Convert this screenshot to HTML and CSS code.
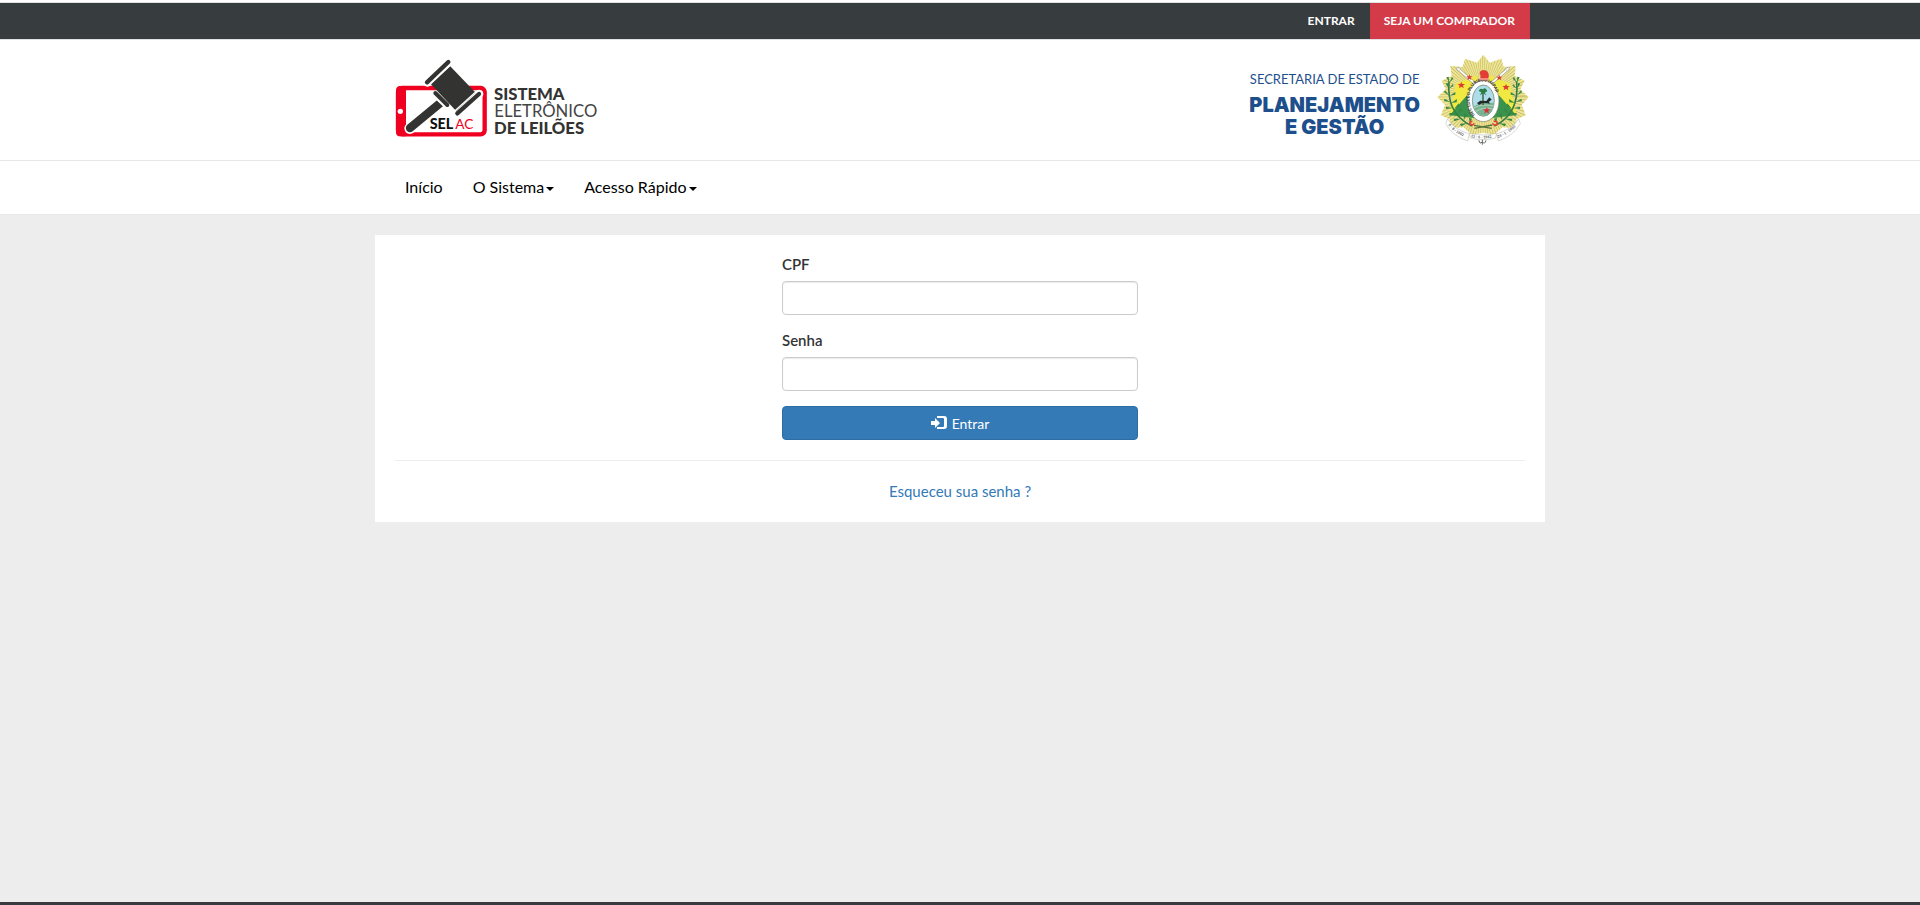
FILE: index.html
```
<!DOCTYPE html>
<html lang="pt-br">
<head>
  <meta charset="UTF-8">
  <meta name="viewport" content="width=device-width, initial-scale=1.0">
  <title>SELAC - Sistema Eletrônico de Leilões</title>
  <link rel="stylesheet" href="styles.css">
</head>
<body>
  <div class="topbar">
    <div class="container topbar-links">
      <a href="#">ENTRAR</a>
      <a href="#" class="destaque">SEJA UM COMPRADOR</a>
    </div>
  </div>

  <header class="header">
    <div class="container header-inner">
      <a href="#" class="logo" aria-label="SELAC">
        <svg width="205" height="84" viewBox="45 24 615 252">
          <rect x="54" y="114" width="260" height="139" rx="12" fill="#fff" stroke="#f00020" stroke-width="13"/>
          <path d="M60 108H78V259H60Q48 259 48 245V122Q48 108 60 108Z" fill="#f00020"/>
          <circle cx="61" cy="184" r="8" fill="#fff"/>
          <g stroke="#fff" stroke-width="26" stroke-linecap="round">
            <path d="M142 97L205 36M232 190L297 132"/>
          </g>
          <path d="M90 235L176 157" stroke="#fff" stroke-width="34" stroke-linecap="round"/>
          <path d="M90 234L180 160" stroke="#333331" stroke-width="25" stroke-linecap="round"/>
          <path d="M163 129L205 169" stroke="#fff" stroke-width="22"/>
          <path d="M152 102L210 48L287 128L228 182Z" fill="#333331"/>
          <path d="M166 129L202 165" stroke="#333331" stroke-width="12" stroke-linecap="round"/>
          <path d="M149 104L211 46M225 182L287 126" stroke="#fff" stroke-width="4"/>
          <path d="M141 97L205 36M232 190L297 132" stroke="#333331" stroke-width="13" stroke-linecap="round"/>
          <text x="149" y="238" class="logo-sel">SEL</text>
          <text x="226" y="238" class="logo-ac">AC</text>
          <text x="342" y="150" class="logo-forte">SISTEMA</text>
          <text x="343" y="201" class="logo-leve">ELETRÔNICO</text>
          <text x="342" y="252" class="logo-forte">DE LEILÕES</text>
        </svg>
      </a>
      <div class="governo">
        <div class="secretaria">
          <span>SECRETARIA DE ESTADO DE</span>
          <strong>PLANEJAMENTO<br>E GESTÃO</strong>
        </div>
        <svg class="brasao" width="92" height="92" viewBox="54 26 276 276" role="img" aria-label="Brasão do Acre">
          <defs>
            <clipPath id="estrela">
              <path d="M193 28L212 52L247 40L254 65L290 62L287 92L317 106L304 132L329 156L308 178L320 210L292 222L290 248L250 246L226 268L192 262L158 268L134 246L94 248L92 222L66 210L78 178L55 156L80 132L68 106L98 92L94 62L131 65L138 40L174 52Z"/>
            </clipPath>
            <path id="lema" d="M168 209C147 187 146 138 166 119C180 105 205 105 218 119C238 139 238 185 215 210"/>
          </defs>
          <g clip-path="url(#estrela)">
            <rect x="54" y="27" width="276" height="276" fill="#eee593"/>
            <circle cx="192" cy="154" r="74" fill="none" stroke="#b5aa5a" stroke-width="148" stroke-dasharray="1 4"/>
          </g>
          <!-- bandeiras -->
          <path d="M174 90L111 115L92 209L170 219Z" fill="#f1e941"/>
          <path d="M210 90L273 115L292 209L214 219Z" fill="#f1e941"/>
          <path d="M144 150L92 210L170 219Z" fill="#39934c"/>
          <path d="M240 150L292 210L214 219Z" fill="#39934c"/>
          <path d="M114 68L174 120M270 68L210 120" stroke="#a7a681" stroke-width="9"/>
          <path d="M114 68L174 120M270 68L210 120" stroke="#fff" stroke-width="5"/>
          <path d="M112 66L126 70L119 78ZM272 66L258 70L265 78Z" fill="#fff" stroke="#888" stroke-width="1"/>
          <g fill="#dd3b2f">
            <path d="M151 87l2 6 7 0-5 4 2 7-6-4-6 4 2-7-5-4 7 0Z"/>
            <path d="M241 88l2 6 7 0-5 4 2 7-6-4-6 4 2-7-5-4 7 0Z"/>
            <path d="M127 110l3 6 8 0-6 5 2 8-7-5-7 5 2-8-6-5 8 0Z"/>
            <path d="M261 116l3 6 8 0-6 5 2 8-7-5-7 5 2-8-6-5 8 0Z"/>
          </g>
          <!-- ramos -->
          <path d="M90 108C86 162 97 213 159 242M293 108C298 162 287 213 226 242" fill="none" stroke="#357e40" stroke-width="5"/>
          <g fill="#398747">
            <path d="M90 130l-10-15 6-3ZM90 130l12-15 1 7ZM91 112l-9-16 7-2ZM91 112l8-18 4 6ZM91 151l-16-10 3-6ZM92 151l17-11 0 8ZM94 170l-19-3 2-7ZM96 173l18-12-1 10ZM101 188l-20 3 0-7ZM105 191l14-17 2 9ZM112 204l-20 7-1-8ZM116 207l8-20 6 8ZM126 220l-20 8-2-8ZM134 224l2-21 8 6ZM145 234l-19 9-3-8ZM152 235l-2-18 9 3Z"/>
            <path d="M294 130l10-15-6-3ZM294 130l-12-15-1 7ZM293 112l9-16-7-2ZM293 112l-8-18-4 6ZM293 151l16-10-3-6ZM292 151l-17-11 0 8ZM290 170l19-3-2-7ZM288 173l-18-12 1 10ZM283 188l20 3 0-7ZM279 191l-14-17-2 9ZM272 204l20 7 1-8ZM268 207l-8-20-6 8ZM258 220l20 8 2-8ZM250 224l-2-21-8 6ZM239 234l19 9 3-8ZM232 235l2-18-9 3Z"/>
          </g>
          <!-- escudo -->
          <ellipse cx="193" cy="167" rx="47" ry="62" fill="#fff" stroke="#767b68" stroke-width="2"/>
          <ellipse cx="193" cy="166" rx="33" ry="47" fill="#acdde9" stroke="#70765f" stroke-width="2"/>
          <path d="M163 184Q194 166 225 174Q222 207 199 212Q174 211 163 184Z" fill="#77b393"/>
          <path d="M164 188Q190 174 224 182M170 199Q194 183 220 191" fill="none" stroke="#d0e2ca" stroke-width="2"/>
          <path d="M192 179V139" stroke="#34583a" stroke-width="4"/>
          <path d="M179 137Q184 126 192 132Q199 123 205 138L197 142L203 150L192 144L183 150L187 141Z" fill="#287e43"/>
          <path d="M174 173L184 166L202 167L211 156L218 163L210 169L212 177L207 174L190 173L180 179Z" fill="#222b27"/>
          <path d="M204 185l2 7 8 0-6 5 2 8-7-5-7 5 2-8-6-5 8 0Z" fill="#d6343c"/>
          <text class="lema"><textPath href="#lema">NEC LUCEO PLURIBUS IMPAR</textPath></text>
          <!-- barrete -->
          <path d="M181 104Q187 98 185 91Q178 76 193 75Q208 75 209 91L206 105Z" fill="#e73b37" stroke="#a63931" stroke-width="1"/>
          <path d="M181 101H207" stroke="#fbded0" stroke-width="3"/>
          <path d="M160 228Q151 228 153 236Q161 242 166 234M224 228Q236 226 235 236Q226 243 221 234" fill="none" stroke="#e74236" stroke-width="5"/>
          <path d="M165 240L218 249M220 239L166 249" stroke="#54713c" stroke-width="4"/>
          <!-- faixa -->
          <path d="M86 221Q103 251 151 266L146 287Q99 271 80 235Z" fill="#fff" stroke="#8b8b82" stroke-width="1"/>
          <path d="M299 221Q280 251 233 266L238 287Q284 271 304 235Z" fill="#fff" stroke="#8b8b82" stroke-width="1"/>
          <path d="M151 264Q190 274 233 264L230 278Q192 288 154 278Z" fill="#fff" stroke="#8b8b82" stroke-width="1"/>
          <path id="d1" d="M88 239Q107 265 145 278" fill="none"/>
          <path id="d2" d="M155 275Q192 284 231 275" fill="none"/>
          <path id="d3" d="M237 278Q278 262 299 235" fill="none"/>
          <text class="data"><textPath href="#d1">6 - 8 - 1902</textPath></text>
          <text class="data"><textPath href="#d2">15 - 6 - 1962</textPath></text>
          <text class="data"><textPath href="#d3">24 - 1 - 1903</textPath></text>
          <path d="M180 285Q181 298 190 290Q198 298 201 285M190 283V298" fill="none" stroke="#666" stroke-width="3"/>
        </svg>
      </div>
    </div>
  </header>

  <nav class="menu">
    <div class="container menu-links">
      <a href="#">Início</a>
      <a href="#">O Sistema<span class="caret"></span></a>
      <a href="#">Acesso Rápido<span class="caret"></span></a>
    </div>
  </nav>

  <main class="container conteudo">
    <form class="login">
      <label for="cpf">CPF</label>
      <input type="text" id="cpf" name="cpf">
      <label for="senha">Senha</label>
      <input type="password" id="senha" name="senha">
      <button type="submit">
        <svg width="16" height="14" viewBox="0 0 16 14" aria-hidden="true">
          <path d="M0 5H4V2L9 7L4 12V9H0Z" fill="#fff"/>
          <path d="M6 0H13Q16 0 16 3V10Q16 13 13 13H6V11H12Q13 11 13 10V3Q13 2 12 2H6Z" fill="#fff"/>
        </svg>
        Entrar
      </button>
    </form>
    <hr>
    <p class="esqueceu"><a href="#">Esqueceu sua senha ?</a></p>
  </main>

  <footer class="rodape"></footer>
</body>
</html>
```
FILE: styles.css
```
* {
  box-sizing: border-box;
}
body {
  display: flex;
  flex-direction: column;
  min-height: 100vh;
  margin: 0;
  padding-top: 2px;
  font-family: Lato, sans-serif;
  font-size: 15px;
  line-height: 21px;
  color: #333;
  background-color: #ededed;
  background-image: linear-gradient(#fff, #fff);
  background-size: 100% 2px;
  background-repeat: no-repeat;
}
a {
  color: #337ab7;
  text-decoration: none;
}
.container {
  width: 100%;
  max-width: 1170px;
  margin: 0 auto;
}

/* barra superior */
.topbar {
  background-color: #373d3f;
  border-top: 1px solid #e0e1e4;
  border-bottom: 1px solid #e0e1e4;
}
.topbar-links {
  display: flex;
  justify-content: flex-end;
  padding: 0 15px;
}
.topbar-links a {
  padding: 0 15px 0 14px;
  font-size: 12px;
  font-weight: bold;
  line-height: 36px;
  color: #fff;
}
.topbar-links .destaque {
  background-color: #d33b48;
}

/* cabeçalho */
.header {
  background-color: #fff;
  border-bottom: 1px solid #e7e7e7;
}
.header-inner {
  display: flex;
  justify-content: space-between;
  align-items: center;
  min-height: 120px;
  padding: 0 16px 0 20px;
}
.logo svg,
.brasao {
  display: block;
}
.logo-sel,
.logo-forte {
  font-weight: 900;
  fill: #333331;
}
.logo-sel {
  font-size: 43px;
  fill: #111;
}
.logo-ac {
  font-size: 41px;
  fill: #f00020;
}
.logo-forte,
.logo-leve {
  font-size: 50px;
}
.logo-leve {
  fill: #444;
}
.governo {
  display: flex;
  align-items: center;
  gap: 17px;
}
.secretaria {
  padding-top: 7px;
  text-align: center;
  color: #1d4f8c;
}
.secretaria span {
  display: block;
  font-size: 13px;
}
.secretaria strong {
  display: block;
  padding-top: 4px;
  font-family: Inter, sans-serif;
  font-size: 20px;
  font-weight: 900;
  line-height: 22px;
}
.lema {
  font-size: 13px;
  font-weight: bold;
  fill: #333;
}
.data {
  font-size: 11px;
  font-weight: bold;
  fill: #555;
}

/* menu */
.menu {
  background-color: #fff;
  border-bottom: 1px solid #e7e7e7;
}
.menu-links {
  display: flex;
  padding: 0 15px;
}
.menu-links a {
  padding: 15px 15px 17px;
  font-size: 16px;
  color: #000;
}
.caret {
  display: inline-block;
  margin-left: 2px;
  vertical-align: middle;
  border-top: 4px solid;
  border-left: 4px solid transparent;
  border-right: 4px solid transparent;
}

/* login */
.conteudo {
  margin: 20px auto;
  padding: 19px 20px 20px;
  background-color: #fff;
}
.login {
  display: flex;
  flex-direction: column;
  max-width: 356px;
  margin: 0 auto;
}
.login label {
  margin-bottom: 6px;
  font-weight: 600;
}
.login input {
  height: 34px;
  margin-bottom: 15px;
  padding: 6px 12px;
  font: inherit;
  border: 1px solid #ccc;
  border-radius: 4px;
  box-shadow: inset 0 1px 1px rgba(0, 0, 0, 0.08);
}
.login button {
  display: flex;
  justify-content: center;
  align-items: center;
  gap: 5px;
  height: 34px;
  font: inherit;
  font-size: 14px;
  color: #fff;
  background-color: #337ab7;
  border: 1px solid #2e6da4;
  border-radius: 4px;
  cursor: pointer;
}
hr {
  margin: 20px 0;
  border: 0;
  border-top: 1px solid #eee;
}
.esqueceu {
  margin: 0;
  text-align: center;
}

.rodape {
  height: 3px;
  margin-top: auto;
  background-color: #373a3f;
}
```
